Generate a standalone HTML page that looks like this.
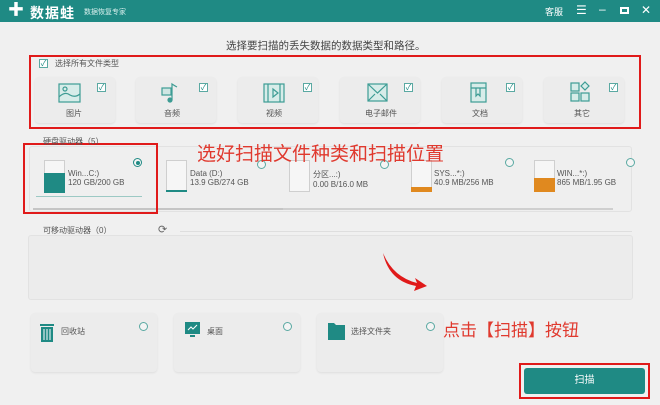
<!DOCTYPE html>
<html><head><meta charset="utf-8"><style>
*{margin:0;padding:0;box-sizing:border-box}
body{width:660px;height:405px;overflow:hidden;background:#f0f0f0;font-family:"Liberation Sans","Noto Sans CJK SC",sans-serif;position:relative;color:#444}
.a{position:absolute}
.t{font-size:8px;color:#555;white-space:nowrap}
.card{position:absolute;background:#ececec;border-radius:4px;box-shadow:0 1px 2px rgba(0,0,0,.08)}
.cb{position:absolute;width:9px;height:9px;border:1px solid #5aa9a2;background:#fff;font-size:8px;line-height:7px;color:#1f8a84;text-align:center}
.rad{position:absolute;width:9px;height:9px;border:1px solid #5aa9a2;border-radius:50%;background:#f4f4f4}
.red{position:absolute;border:2px solid #e01a1a}
.disk{position:absolute;width:21px;height:32px;border:1px solid #cfcfcf;background:#f6f6f6}
.z{z-index:5}
</style></head><body>
<div class="a" style="left:0;top:0;width:660px;height:22px;background:#1f8a84"></div>
<div class="a" style="left:8px;top:4px;width:16px;height:14px;color:#fff;font-size:16px;line-height:14px;font-weight:bold">✚</div>
<div class="a" style="left:30px;top:3px;color:#fff;font-size:14px;font-weight:bold;letter-spacing:1px">数据蛙</div>
<div class="a" style="left:84px;top:7px;color:#d8efed;font-size:7px">数据恢复专家</div>
<div class="a" style="left:545px;top:5px;color:#fff;font-size:9px">客服</div>
<div class="a" style="left:576px;top:3px;color:#fff;font-size:12px">☰</div>
<div class="a" style="left:599px;top:2px;color:#fff;font-size:12px">–</div>
<div class="a" style="left:620px;top:7px;width:9px;height:7px;border:2px solid #fff"></div>
<div class="a" style="left:641px;top:3px;color:#fff;font-size:12px">✕</div>
<div class="a" style="left:226px;top:38px;font-size:10.5px;color:#444">选择要扫描的丢失数据的数据类型和路径。</div>

<div class="cb" style="left:39px;top:59px">✓</div>
<div class="a t" style="left:55px;top:58px">选择所有文件类型</div>
<div class="card" style="left:35px;top:77px;width:80px;height:46px"></div>
<div class="card" style="left:136px;top:77px;width:80px;height:46px"></div>
<div class="card" style="left:238px;top:77px;width:80px;height:46px"></div>
<div class="card" style="left:340px;top:77px;width:80px;height:46px"></div>
<div class="card" style="left:442px;top:77px;width:80px;height:46px"></div>
<div class="card" style="left:544px;top:77px;width:80px;height:46px"></div>
<div class="cb" style="left:97px;top:83px">✓</div><div class="cb" style="left:199px;top:83px">✓</div><div class="cb" style="left:303px;top:83px">✓</div><div class="cb" style="left:404px;top:83px">✓</div><div class="cb" style="left:506px;top:83px">✓</div><div class="cb" style="left:609px;top:83px">✓</div>
<svg class="a" style="left:0;top:0" width="660" height="405" fill="none" stroke="#3d9c94" stroke-width="1.2">
<rect x="59" y="84" width="21" height="18" fill="#d7ece9"/><path d="M59 97 q6-6 11-2 q5 3 10-1"/><circle cx="65" cy="89" r="2"/>
<rect x="162" y="88" width="9" height="7" fill="#cfe6e3"/><path d="M172 100 V84 q3 2 5 3"/><circle cx="170" cy="100" r="2" fill="#3d9c94"/>
<rect x="264" y="84" width="20" height="18" fill="#d7ece9"/><path d="M268 84v18M280 84v18M273 89l5 4-5 4z"/>
<rect x="368" y="84" width="19" height="17" fill="#d7ece9"/><path d="M368 84l9.5 9 9.5-9M368 101l7-7M387 101l-7-7"/>
<rect x="471" y="83" width="15" height="19" fill="#d7ece9"/><path d="M471 88h15M476 88v8l2-2 2 2v-8"/>
<rect x="571" y="83" width="8" height="8" fill="#d7ece9"/><rect x="571" y="93" width="8" height="8" fill="#d7ece9"/><rect x="581" y="93" width="8" height="8" fill="#d7ece9"/><path d="M585 82l4 4-4 4-4-4z" fill="#d7ece9"/>
</svg>
<div class="a t" style="left:66px;top:108px">图片</div>
<div class="a t" style="left:164px;top:108px">音频</div>
<div class="a t" style="left:266px;top:108px">视频</div>
<div class="a t" style="left:365px;top:108px">电子邮件</div>
<div class="a t" style="left:472px;top:108px">文档</div>
<div class="a t" style="left:574px;top:108px">其它</div>
<div class="red" style="left:29px;top:55px;width:612px;height:74px"></div>

<div class="a" style="left:29px;top:146px;width:603px;height:66px;border:1px solid #e2e2e2;border-radius:3px;background:#efefef"></div>
<div class="a t z" style="left:43px;top:136px">硬盘驱动器（5）</div>
<div class="disk" style="left:44px;top:160px"></div><div class="a" style="left:44px;top:173px;width:21px;height:20px;background:#1f8a84"></div>
<div class="a" style="left:68px;top:169px;font-size:8px;color:#555">Win...C:)<br>120 GB/200 GB</div>
<div class="a" style="left:36px;top:196px;width:106px;height:1px;background:#9cc9c4"></div>
<div class="rad" style="left:133px;top:158px;border-color:#1f8a84"><div style="margin:1.5px;width:4px;height:4px;border-radius:50%;background:#1f8a84"></div></div>
<div class="disk" style="left:166px;top:160px"></div><div class="a" style="left:166px;top:190px;width:21px;height:2px;background:#1f8a84"></div>
<div class="a" style="left:190px;top:169px;font-size:8px;color:#555">Data (D:)<br>13.9 GB/274 GB</div>
<div class="rad" style="left:257px;top:160px"></div>
<div class="disk" style="left:289px;top:160px"></div>
<div class="a" style="left:313px;top:169px;font-size:8px;color:#555">分区...:)<br>0.00 B/16.0 MB</div>
<div class="rad" style="left:380px;top:160px"></div>
<div class="disk" style="left:411px;top:160px"></div><div class="a" style="left:411px;top:187px;width:21px;height:5px;background:#e0891f"></div>
<div class="a" style="left:434px;top:169px;font-size:8px;color:#555">SYS...*:)<br>40.9 MB/256 MB</div>
<div class="rad" style="left:505px;top:158px"></div>
<div class="disk" style="left:534px;top:160px"></div><div class="a" style="left:534px;top:178px;width:21px;height:14px;background:#e0891f"></div>
<div class="a" style="left:557px;top:169px;font-size:8px;color:#555">WIN...*:)<br>865 MB/1.95 GB</div>
<div class="rad" style="left:626px;top:158px"></div>
<div class="a" style="left:33px;top:208px;width:250px;height:2px;background:#c5c5c5"></div>
<div class="a" style="left:283px;top:208px;width:330px;height:2px;background:#cfcfcf"></div>
<div class="red" style="left:23px;top:143px;width:135px;height:71px"></div>
<div class="a" style="left:197px;top:139px;font-size:19px;color:#e0392e;white-space:nowrap">选好扫描文件种类和扫描位置</div>

<div class="a" style="left:28px;top:235px;width:605px;height:65px;border:1px solid #e2e2e2;border-radius:3px;background:#ececec"></div>
<div class="a t z" style="left:43px;top:225px">可移动驱动器（0）</div>
<div class="a" style="left:158px;top:223px;font-size:11px;color:#666">⟳</div>
<div class="a" style="left:180px;top:231px;width:452px;height:1px;background:#dedede"></div>
<svg class="a" style="left:375px;top:245px" width="60" height="50"><path d="M8 8 Q18 32 42 38 L40 33 L52 41 L39 46 L41 41 Q14 36 8 8z" fill="#e01a1a"/></svg>

<div class="card" style="left:31px;top:313px;width:126px;height:59px"></div>
<div class="card" style="left:174px;top:313px;width:126px;height:59px"></div>
<div class="card" style="left:317px;top:313px;width:126px;height:59px"></div>
<div class="rad" style="left:139px;top:322px"></div><div class="rad" style="left:283px;top:322px"></div><div class="rad" style="left:426px;top:322px"></div>
<svg class="a" style="left:0;top:0" width="660" height="405">
<rect x="41" y="327" width="12" height="15" fill="#1f8a84"/><rect x="40" y="324" width="14" height="2" fill="#1f8a84"/><path d="M44 329v11M47 329v11M50 329v11" stroke="#fff" stroke-width="1"/>
<rect x="185" y="322" width="15" height="12" fill="#1f8a84"/><rect x="190" y="335" width="5" height="2" fill="#1f8a84"/><path d="M188 330l3-3 2 2 4-4" stroke="#fff" fill="none"/>
<path d="M328 323h6l2 2h9v15h-17z" fill="#1f8a84"/>
</svg>
<div class="a t" style="left:61px;top:326px">回收站</div>
<div class="a t" style="left:207px;top:326px">桌面</div>
<div class="a t" style="left:351px;top:326px">选择文件夹</div>
<div class="a" style="left:443px;top:316px;font-size:17px;color:#e0392e;white-space:nowrap">点击【扫描】按钮</div>

<div class="a" style="left:524px;top:368px;width:121px;height:26px;background:#1f8a84;border-radius:3px;color:#fff;font-size:10px;text-align:center;line-height:26px">扫描</div>
<div class="red" style="left:519px;top:363px;width:131px;height:36px"></div>
</body></html>
